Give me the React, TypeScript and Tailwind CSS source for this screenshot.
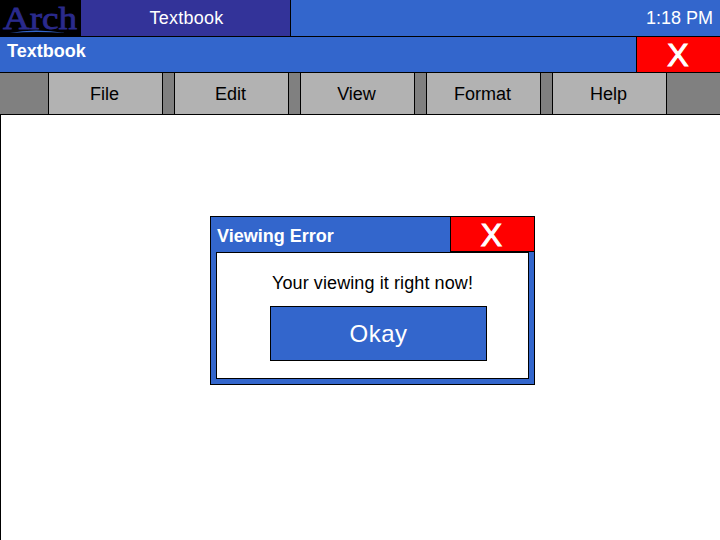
const sans = "font-['Liberation_Sans',Arial,sans-serif]";

const menu = ["File", "Edit", "View", "Format", "Help"];

function Logo() {
  return (
    <svg viewBox="0 0 80 36" className="h-9 w-20 bg-black" aria-label="Arch">
      <text
        x="3"
        y="29"
        textLength="74"
        lengthAdjust="spacingAndGlyphs"
        fontFamily="Liberation Serif, serif"
        fontSize="32"
        stroke="#2a2a8c"
        strokeWidth="0.8"
        fill="#2a2a8c"
      >
        Arch
      </text>
      <path d="M10 33 Q34 28 66 33 Q36 31 10 33Z" fill="#3366cc" />
    </svg>
  );
}

export default function App() {
  return (
    <div className={`${sans} flex h-[540px] w-[720px] flex-col overflow-hidden bg-white`}>
      <div className="flex h-[37px] border-b border-black bg-[#3366cc] text-white">
        <Logo />
        <div className="flex w-[211px] items-center justify-center border-x border-black bg-[#333399] pl-[2px] text-[18px] tracking-[0.25px]">
          Textbook
        </div>
        <div className="flex flex-1 items-center justify-end pr-[7px] text-[18px]">1:18 PM</div>
      </div>

      <div className="flex h-9 border-b border-black bg-[#3366cc] text-white">
        <div className="flex-1 pl-[7px] pt-[1px] text-[18px] font-bold">Textbook</div>
        <div className="flex w-[84px] items-center justify-center border-l border-black bg-[#ff0000] pr-[1px] text-[32px] leading-none [-webkit-text-stroke:1px_white]">
          X
        </div>
      </div>

      <div className="flex h-[42px] gap-[11px] border-b border-black bg-[#808080] pl-12 text-[18px] text-black">
        {menu.map((label) => (
          <div
            key={label}
            className="flex w-[115px] items-center justify-center border-x border-black bg-[#b2b2b2] pr-[2px] pt-[2px]"
          >
            {label}
          </div>
        ))}
      </div>

      <main className="relative flex-1 border-l border-black">
        <div className="absolute left-[209px] top-[101px] h-[169px] w-[325px] border border-black bg-[#3366cc] text-white">
          <div className="flex h-[35px]">
            <div className="flex-1 pl-[6px] pt-[9px] text-[18px] leading-[20px] font-bold">Viewing Error</div>
            <div className="flex w-[84px] items-center justify-center border-b border-l border-black bg-[#ff0000] pr-[2px] pt-[2px] text-[32px] leading-none [-webkit-text-stroke:1px_white]">
              X
            </div>
          </div>
          <div className="ml-[5px] h-[127px] w-[313px] border border-black bg-white text-black">
            <p className="mt-[20px] text-center text-[18px] leading-[20px] tracking-[0.1px]">Your viewing it right now!</p>
            <button className="mt-[13px] ml-[53px] flex h-[55px] w-[217px] items-center justify-center border border-black bg-[#3366cc] text-[24px] tracking-[0.5px] text-white">
              Okay
            </button>
          </div>
        </div>
      </main>
    </div>
  );
}
